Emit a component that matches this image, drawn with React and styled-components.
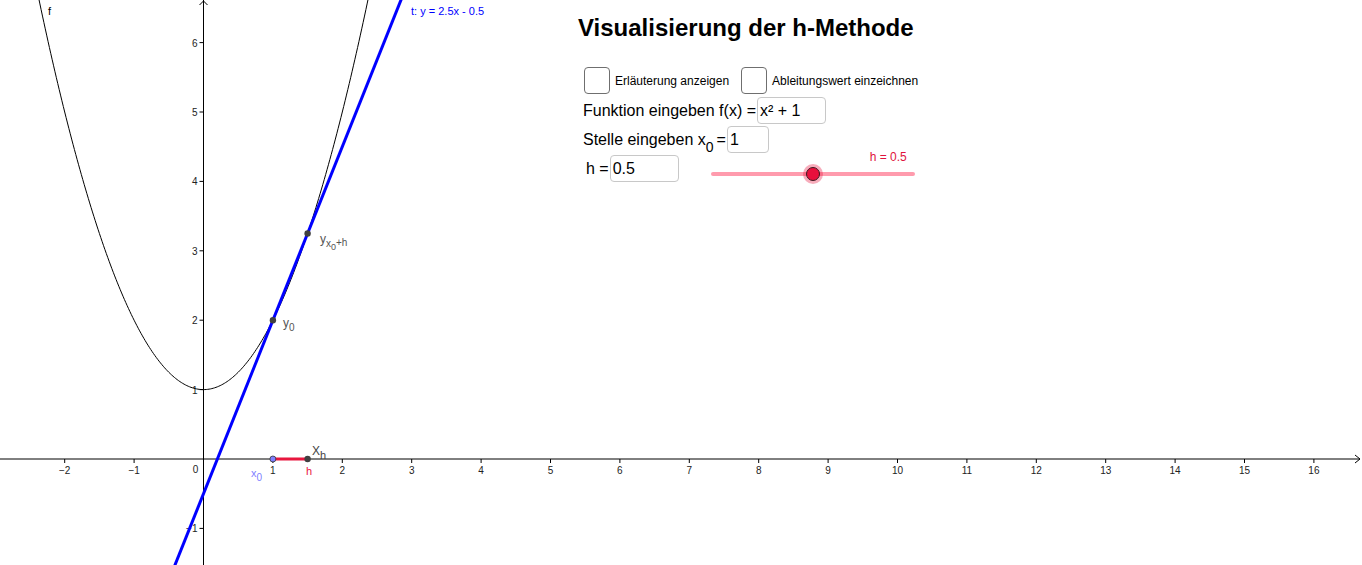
import React from "react";
import styled, { createGlobalStyle } from "styled-components";

const OX = 203.5;
const OY = 459;
const U = 69.4;
const W = 1362;
const H = 565;

const px = (x) => OX + x * U;
const py = (y) => OY - y * U;

const GlobalStyle = createGlobalStyle`
  html, body {
    margin: 0;
    padding: 0;
    background: #ffffff;
    overflow: hidden;
  }
  body {
    font-family: "Liberation Sans", Arial, sans-serif;
  }
`;

const Stage = styled.div`
  position: relative;
  width: ${W}px;
  height: ${H}px;
  background: #ffffff;
`;

const Canvas = styled.svg`
  display: block;
  font-family: "Liberation Sans", Arial, sans-serif;
`;

const Panel = styled.div`
  position: absolute;
  left: 578px;
  top: 10px;
  display: flex;
  flex-direction: column;
  color: #000;
`;

const Title = styled.h1`
  margin: 0 0 20px 0;
  font-size: 24px;
  line-height: 36px;
  font-weight: 700;
`;

const CheckRow = styled.div`
  display: flex;
  align-items: center;
  padding-left: 6px;
  height: 28px;
  margin-bottom: 3px;
`;

const Check = styled.span`
  width: 24px;
  height: 25px;
  border: 1px solid #6f6f6f;
  border-radius: 4px;
  box-sizing: content-box;
  flex: none;
`;

const CheckLabel = styled.span`
  font-size: 12px;
  margin: 0 12px 0 5px;
  position: relative;
  top: 1px;
`;

const FieldRow = styled.div`
  display: flex;
  align-items: center;
  height: 27px;
  margin-bottom: 2px;
  padding-left: ${(p) => p.$indent || 5}px;
  font-size: 16px;
`;

const FieldLabel = styled.span`
  white-space: pre;
  sub {
    font-size: 14px;
    vertical-align: -7px;
    line-height: 0;
    margin-right: 3px;
  }
`;

const Input = styled.span`
  box-sizing: border-box;
  height: 27px;
  width: ${(p) => p.$w}px;
  border: 1px solid #c8c8c8;
  border-radius: 4px;
  padding-left: 2px;
  display: flex;
  align-items: center;
  margin-left: 1px;
  font-size: 16px;
`;

const Slider = styled.div`
  display: flex;
  flex-direction: column;
  align-items: flex-end;
  width: 204px;
  margin-left: 32px;
  margin-top: -11px;
`;

const SliderLabel = styled.span`
  color: #e0143c;
  font-size: 12px;
  line-height: 13px;
  margin-right: 8px;
`;

const Track = styled.div`
  position: relative;
  width: 100%;
  height: 4px;
  margin-top: 8px;
  border-radius: 2px;
  background: #ff9bad;
`;

const Knob = styled.span`
  position: absolute;
  left: ${(p) => p.$pos}%;
  top: 50%;
  width: 12px;
  height: 12px;
  margin: -7px 0 0 -7px;
  border-radius: 50%;
  background: #e8103c;
  border: 1px solid #3a1a20;
  box-shadow: 0 0 0 3px rgba(232, 16, 60, 0.35);
`;

function Graph() {
  const xs = [];
  for (let i = -2; i <= 16; i++) xs.push(i);
  const ys = [-1, 1, 2, 3, 4, 5, 6];

  let parab = "";
  for (let x = -2.4; x <= 2.4; x += 0.02) {
    parab += (parab ? " L" : "M") + px(x).toFixed(2) + " " + py(x * x + 1).toFixed(2);
  }
  const tx1 = -0.5;
  const tx2 = 2.9;

  return (
    <Canvas width={W} height={H} viewBox={`0 0 ${W} ${H}`}>
      {/* axes */}
      <line x1="0" y1={OY} x2={W - 2} y2={OY} stroke="#000" strokeWidth="1" />
      <polyline points={`${W - 7},${OY - 4} ${W - 2},${OY} ${W - 7},${OY + 4}`} fill="none" stroke="#000" />
      <line x1={OX} y1="0" x2={OX} y2={H} stroke="#000" strokeWidth="1" />
      <polyline points={`${OX - 4},5 ${OX},1 ${OX + 4},5`} fill="none" stroke="#000" />

      {xs.map((i) =>
        i === 0 ? (
          <text key={i} x={OX - 8} y={OY + 14} fontSize="10" fill="#222" textAnchor="middle">0</text>
        ) : (
          <g key={i}>
            <line x1={px(i)} y1={OY} x2={px(i)} y2={OY + 4} stroke="#000" />
            <text x={px(i)} y={OY + 15} fontSize="10" fill="#222" textAnchor="middle">
              {i < 0 ? "\u2212" + -i : i}
            </text>
          </g>
        )
      )}
      {ys.map((j) => (
        <g key={j}>
          <line x1={OX - 4} y1={py(j)} x2={OX} y2={py(j)} stroke="#000" />
          <text x={OX - 6} y={py(j) + 4} fontSize="10" fill="#222" textAnchor="end">
            {j < 0 ? "\u2212" + -j : j}
          </text>
        </g>
      ))}

      {/* f */}
      <path d={parab} fill="none" stroke="#000" strokeWidth="1" />
      <text x="48" y="15" fontSize="11" fill="#000">f</text>

      {/* t */}
      <line x1={px(tx1)} y1={py(2.5 * tx1 - 0.5)} x2={px(tx2)} y2={py(2.5 * tx2 - 0.5)} stroke="#0000ff" strokeWidth="3" />
      <text x="411" y="15" fontSize="11" fill="#0000ff">t: y = 2.5x - 0.5</text>

      {/* h segment */}
      <line x1={px(1)} y1={OY} x2={px(1.5)} y2={OY} stroke="#e8163e" strokeWidth="3" />
      <circle cx={px(1)} cy={OY} r="3" fill="#7f7fff" stroke="#333" strokeWidth="0.8" />
      <circle cx={px(1.5)} cy={OY} r="3.2" fill="#404040" />

      <text x="251" y="477" fontSize="11" fill="#7f7fff">
        x<tspan dy="4" fontSize="10">0</tspan>
      </text>
      <text x="306" y="475" fontSize="11" fill="#e8163e">h</text>
      <text x="312" y="455" fontSize="12" fill="#444">
        X<tspan dy="4" fontSize="11">h</tspan>
      </text>

      {/* points on f */}
      <circle cx={px(1)} cy={py(2)} r="3.2" fill="#404040" />
      <circle cx={px(1.5)} cy={py(3.25)} r="3.2" fill="#404040" />
      <text x="283" y="327" fontSize="12" fill="#555">
        y<tspan dy="4" fontSize="10">0</tspan>
      </text>
      <text x="320" y="243" fontSize="12" fill="#555">
        y<tspan dy="4" fontSize="10">x</tspan>
        <tspan dy="3" fontSize="9">0</tspan>
        <tspan dy="-4" fontSize="10">+h</tspan>
      </text>
    </Canvas>
  );
}

export default function App() {
  return (
    <>
      <GlobalStyle />
      <Stage>
        <Graph />
        <Panel>
          <Title>Visualisierung der h-Methode</Title>
          <CheckRow>
            <Check />
            <CheckLabel>Erläuterung anzeigen</CheckLabel>
            <Check />
            <CheckLabel>Ableitungswert einzeichnen</CheckLabel>
          </CheckRow>
          <FieldRow>
            <FieldLabel>Funktion eingeben f(x) =</FieldLabel>
            <Input $w={69}>x² + 1</Input>
          </FieldRow>
          <FieldRow>
            <FieldLabel>
              Stelle eingeben x<sub>0</sub>=
            </FieldLabel>
            <Input $w={42}>1</Input>
          </FieldRow>
          <FieldRow $indent={8}>
            <FieldLabel>h =</FieldLabel>
            <Input $w={69}>0.5</Input>
            <Slider>
              <SliderLabel>h = 0.5</SliderLabel>
              <Track>
                <Knob $pos={50} />
              </Track>
            </Slider>
          </FieldRow>
        </Panel>
      </Stage>
    </>
  );
}
